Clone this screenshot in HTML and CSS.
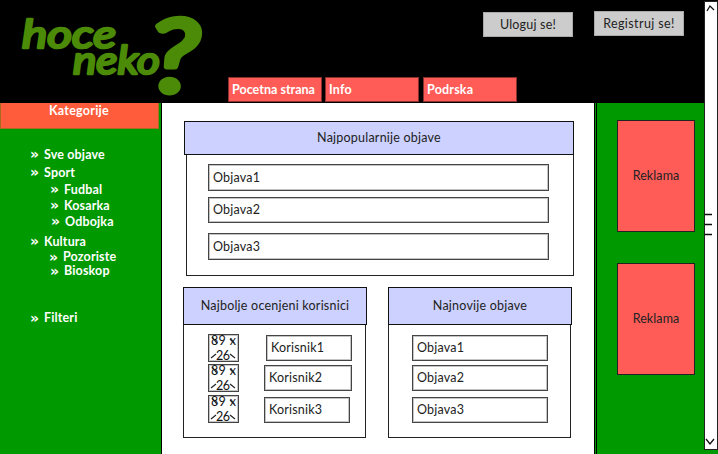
FILE: index.html
```html
<!DOCTYPE html>
<html lang="sr">
<head>
<meta charset="utf-8">
<title>Hoce neko?</title>
<link rel="stylesheet" href="styles.css">
</head>
<body>
<div class="page">
  <div class="site">
    <header class="header">
      <svg class="logo" width="190" height="84" viewBox="0 0 190 84" role="img" aria-label="hoce neko?">
        <text class="word hoce" x="2" y="33" textLength="94" lengthAdjust="spacingAndGlyphs">hoce</text>
        <text class="word neko" x="53" y="58.5" textLength="87" lengthAdjust="spacingAndGlyphs">neko</text>
        <text class="mark" x="129" y="77" textLength="51" lengthAdjust="spacingAndGlyphs">?</text>
      </svg>
      <nav class="nav">
        <a class="tab wide">Pocetna strana</a>
        <a class="tab info">Info</a>
        <a class="tab">Podrska</a>
      </nav>
      <div class="account">
        <button class="button login">Uloguj se!</button>
        <button class="button register">Registruj se!</button>
      </div>
    </header>
    <div class="columns">
      <aside class="sidebar">
        <h2 class="sidebar-title">Kategorije</h2>
        <ul class="menu">
          <li><span>&raquo;</span>Sve objave</li>
          <li class="sport"><span>&raquo;</span>Sport</li>
          <li class="sub fudbal"><span>&raquo;</span>Fudbal</li>
          <li class="sub kosarka"><span>&raquo;</span>Kosarka</li>
          <li class="sub odbojka"><span>&raquo;</span>Odbojka</li>
          <li class="kultura"><span>&raquo;</span>Kultura</li>
          <li class="sub pozoriste"><span>&raquo;</span>Pozoriste</li>
          <li class="sub bioskop"><span>&raquo;</span>Bioskop</li>
          <li class="filteri"><span>&raquo;</span>Filteri</li>
        </ul>
      </aside>
      <main class="main">
        <section class="panel popular">
          <h3>Najpopularnije objave</h3>
          <div class="body">
            <div class="field">Objava1</div>
            <div class="field second">Objava2</div>
            <div class="field third">Objava3</div>
          </div>
        </section>
        <div class="pair">
          <section class="panel users">
            <h3>Najbolje ocenjeni korisnici</h3>
            <div class="body">
              <div class="user"><div class="thumb"><svg width="29" height="26" viewBox="0 0 29 26"><text x="2" y="9.5" textLength="25">89 x</text><text x="7" y="25" textLength="14">26</text><path d="M2 23L7 19M21 19L26 23M3 2L8 8M21 4L25 8"/></svg></div><div class="field">Korisnik1</div></div>
              <div class="user two"><div class="thumb"><svg width="29" height="26" viewBox="0 0 29 26"><text x="2" y="9.5" textLength="25">89 x</text><text x="7" y="25" textLength="14">26</text><path d="M2 23L7 19M21 19L26 23M3 2L8 8M21 4L25 8"/></svg></div><div class="field">Korisnik2</div></div>
              <div class="user three"><div class="thumb"><svg width="29" height="26" viewBox="0 0 29 26"><text x="2" y="9.5" textLength="25">89 x</text><text x="7" y="25" textLength="14">26</text><path d="M2 23L7 19M21 19L26 23M3 2L8 8M21 4L25 8"/></svg></div><div class="field">Korisnik3</div></div>
            </div>
          </section>
          <section class="panel newest">
            <h3>Najnovije objave</h3>
            <div class="body">
              <div class="field">Objava1</div>
              <div class="field second">Objava2</div>
              <div class="field third">Objava3</div>
            </div>
          </section>
        </div>
      </main>
      <aside class="ads">
        <div class="ad">Reklama</div>
        <div class="ad">Reklama</div>
      </aside>
    </div>
  </div>
  <div class="rail">
    <div class="scrollbar">
      <svg width="12" height="12" viewBox="0 0 12 12"><path d="M2 9L5 4L9 8"/></svg>
      <svg class="grip" width="12" height="24" viewBox="0 0 12 24"><path d="M0 1.5H7M0 11.5H7M0 21.5H7"/></svg>
      <svg width="12" height="12" viewBox="0 0 12 12"><path d="M1 2L5 7L9 2"/></svg>
    </div>
  </div>
</div>
</body>
</html>
```
FILE: styles.css
```css
* { box-sizing: border-box; }
body {
  margin: 0;
  width: 718px;
  height: 454px;
  overflow: hidden;
  font: 12.5px/16px "Comic Sans MS", Lato, sans-serif;
  color: #222;
}
h2, h3, ul { margin: 0; padding: 0; list-style: none; font-size: inherit; }
.page { display: flex; height: 454px; }
.site { width: 704px; }

.header { display: flex; height: 103px; background: #000; }
.logo { flex: none; margin: 15px 0 0 20px; overflow: visible; }
.logo text {
  font-family: "Comic Sans MS", Lato, sans-serif;
  font-weight: 400;
  font-style: italic;
  fill: #4b8b08;
  stroke: #4b8b08;
  stroke-linejoin: round;
}
.word { font-size: 38px; stroke-width: 2.6px; }
.logo .mark { font-size: 101px; stroke-width: 6px; }
.nav { display: flex; align-self: flex-end; gap: 4px; margin: 0 0 1px 18px; }
.tab {
  width: 94px;
  height: 25px;
  padding: 4px 0 0 3px;
  border: 1px solid #8a302e;
  background: #ff5c58;
  color: #fff;
  font-weight: 700;
  letter-spacing: .2px;
  white-space: nowrap;
}
.tab.wide { letter-spacing: .02px; }
.tab.info { margin-left: -1px; }
.account { display: flex; gap: 21px; margin: 11px 0 0 -34px; }
.button {
  width: 90px;
  height: 25px;
  padding: 0;
  border: 1px solid #aaa;
  background: #ccc;
  color: #222;
  font: inherit;
  letter-spacing: .2px;
}
.login { margin-top: 1px; }
.register { letter-spacing: .4px; }

.columns { display: flex; height: 351px; }
.sidebar { width: 162px; border-right: 1px solid #000; background: #009900; color: #fff; font-weight: 700; }
.sidebar-title { width: 159px; height: 26px; padding-right: 1px; border: 1px solid #a96b22; border-top: 0; background: #ff5c3b; letter-spacing: .25px; text-align: center; }
.menu { padding: 18px 0 0 30px; letter-spacing: .15px; }
.menu li { display: flex; height: 16px; line-height: 16px; }
.menu span { width: 14px; font: 700 14px/14px "DejaVu Sans", sans-serif; letter-spacing: 0; }
.menu .sport { margin-top: 2px; }
.menu .sub { padding-left: 20px; }
.menu .fudbal { margin-top: 1px; }
.menu .odbojka { padding-left: 21px; }
.menu .kultura { margin-top: 4px; }
.menu .pozoriste { height: 14px; padding-left: 19px; line-height: 14px; }
.menu .bioskop { line-height: 14px; }
.menu .filteri { margin-top: 31px; line-height: 14px; }

.main { width: 432px; padding: 18px 0 0 21px; }
.panel h3 { display: flex; align-items: center; justify-content: center; border: 1px solid #111; background: #ccd1ff; font-weight: 400; letter-spacing: .22px; }
.body { border: 1px solid #222; border-top: 0; }
.field { display: flex; align-items: center; padding-left: 4px; border: 1px solid #444; box-shadow: inset 0 0 0 1px #c4c4c4; letter-spacing: .2px; }
.popular { width: 390px; margin-left: 1px; }
.popular h3 { height: 34px; }
.popular .body { height: 121px; margin-left: 2px; padding: 9px 24px 0 21px; }
.popular .field { height: 27px; }
.popular .second { height: 26px; margin-top: 6px; }
.popular .third { margin-top: 10px; }
.pair { display: flex; gap: 21px; margin-top: 11px; }
.pair h3 { height: 38px; }
.pair .body { height: 113px; }
.users { width: 184px; }
.users .body { width: 183px; padding: 9px 0 0 24px; }
.user { display: flex; align-items: flex-start; height: 30px; }
.thumb { width: 31px; height: 28px; border: 1px solid #444; box-shadow: inset 0 0 0 1px #c4c4c4; }
.thumb svg { display: block; }
.thumb text { font-size: 12.5px; fill: #111; }
.thumb path { fill: none; stroke: #222; stroke-width: 1.2; }
.user .field { width: 86px; height: 26px; margin: 1px 0 0 27px; }
.user.two .field { width: 88px; margin: 1px 0 0 25px; }
.user.three { margin-top: 1px; }
.user.three .field { margin: 2px 0 0 25px; }
.newest { width: 184px; }
.newest .body { width: 183px; padding: 10px 22px 0 23px; }
.newest .field { height: 26px; }
.newest .second { margin-top: 4px; }
.newest .third { margin-top: 6px; }

.ads { display: flex; flex-direction: column; gap: 31px; width: 110px; padding: 17px 0 0 20px; border-left: 3px double #000; background: #009900; }
.ad { display: flex; align-items: center; justify-content: center; width: 78px; height: 112px; border: 1px solid #222; background: #ff5c58; letter-spacing: .1px; }

.rail { width: 14px; background: linear-gradient(#000 103px, #009900 0); }
.scrollbar { display: flex; flex-direction: column; align-items: flex-start; height: 449px; margin-top: 1px; border: 1px solid #222; background: #fff; }
.scrollbar path { fill: none; stroke: #111; stroke-width: 1.3; }
.scrollbar svg { flex: none; }
.grip { margin: 199px 0 auto; }
```
